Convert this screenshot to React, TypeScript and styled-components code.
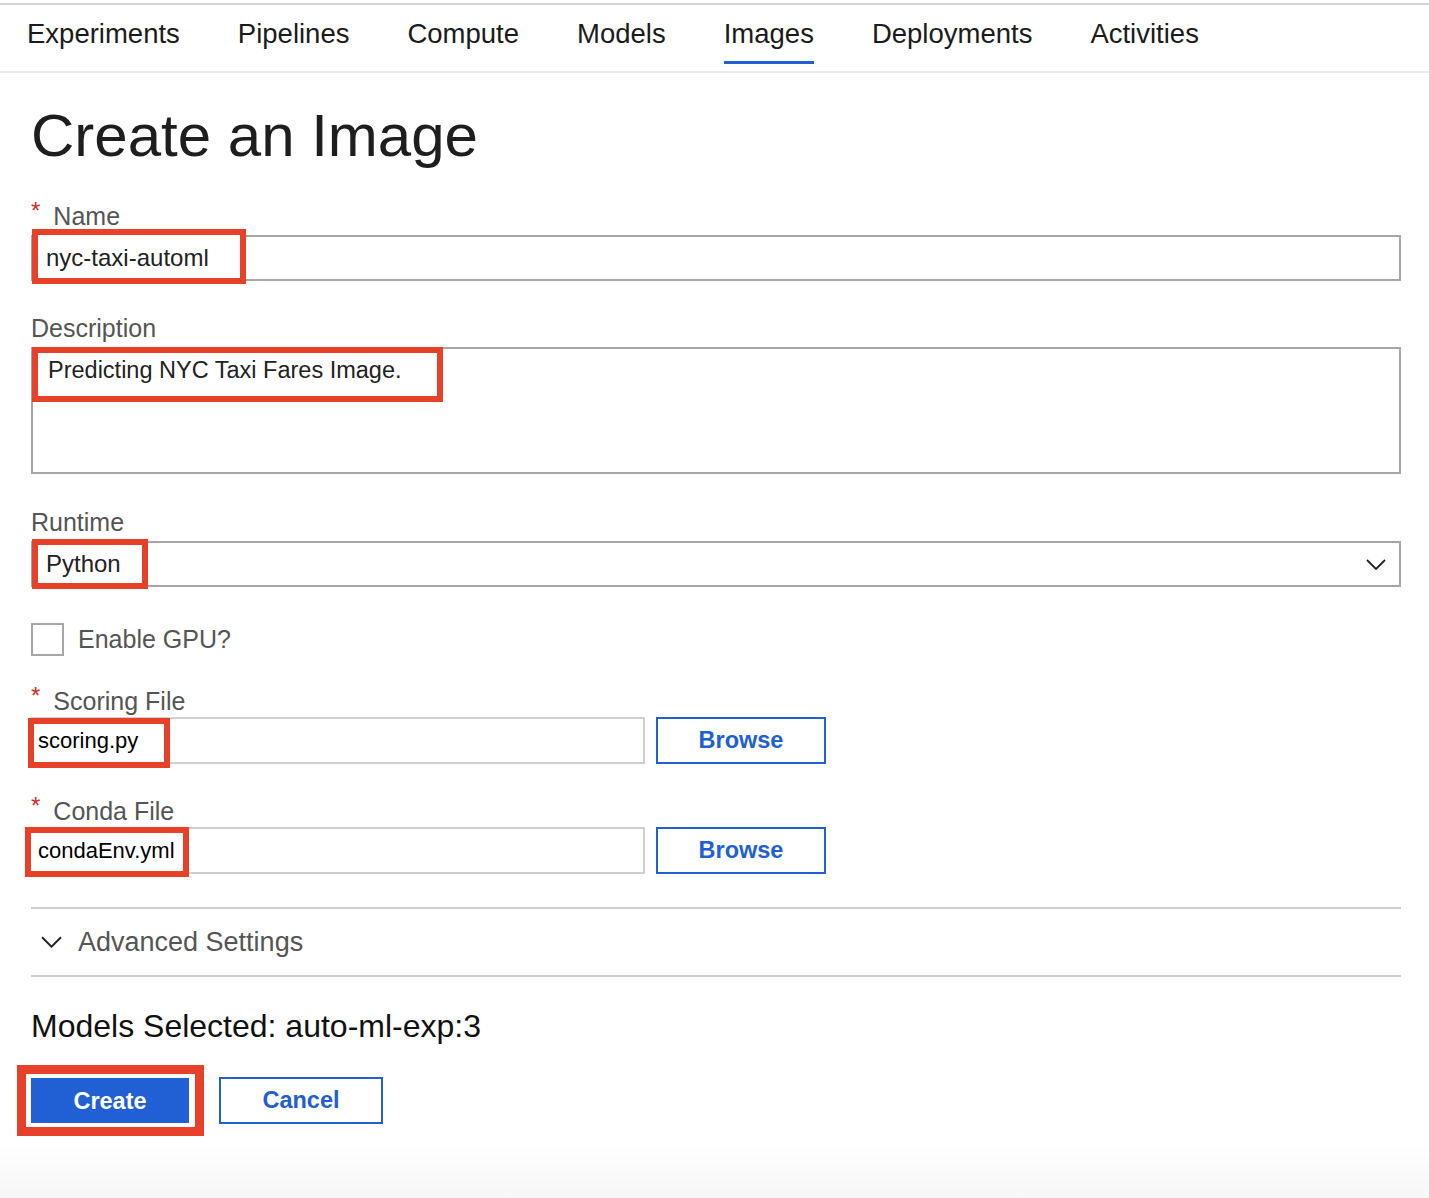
import React from "react";
import styled, { createGlobalStyle } from "styled-components";

const blue = "#2160d4";
const markRed = "#e8412a";

const GlobalStyle = createGlobalStyle`
  html, body {
    margin: 0;
    padding: 0;
  }
  body {
    font-family: "Liberation Sans", Arial, sans-serif;
    color: #222;
    background: linear-gradient(to bottom, #fff 0, #fff 1140px, #f6f6f6 1198px);
    min-height: 1198px;
  }
`;

const NavBar = styled.nav`
  margin-top: 3px;
  height: 66px;
  border-top: 2px solid #d6d6d6;
  border-bottom: 2px solid #e8e8e8;
  display: flex;
  align-items: flex-start;
  gap: 58px;
  padding-left: 27px;
`;

const NavItem = styled.a<{ $active?: boolean }>`
  padding-top: 13px;
  padding-bottom: 11px;
  font-size: 27.5px;
  line-height: 32px;
  color: #1b1b1b;
  text-decoration: none;
  border-bottom: 3px solid ${(p) => (p.$active ? blue : "transparent")};
  cursor: pointer;
`;

const Page = styled.main`
  padding: 0 28px 0 31px;
`;

const Title = styled.h1`
  margin: 28px 0 0;
  font-size: 60px;
  line-height: 70px;
  font-weight: 400;
  color: #1e1e1e;
`;

const Field = styled.div<{ $gap?: number }>`
  margin-top: ${(p) => p.$gap ?? 32}px;
`;

const Label = styled.label<{ $tight?: boolean }>`
  display: block;
  height: 30px;
  font-size: 25px;
  line-height: 30px;
  color: #555;
  margin-bottom: ${(p) => (p.$tight ? 1 : 4)}px;
`;

const Required = styled.span`
  display: inline-block;
  vertical-align: top;
  line-height: 20px;
  color: #d8291f;
  font-size: 24px;
  margin-right: 13px;
`;

const Anchor = styled.div`
  position: relative;
`;

const Mark = styled.div<{ $x: number; $y: number; $w: number; $h: number; $b?: number; $pad?: number }>`
  position: absolute;
  left: ${(p) => p.$x}px;
  top: ${(p) => p.$y}px;
  width: ${(p) => p.$w}px;
  height: ${(p) => p.$h}px;
  box-sizing: border-box;
  border: ${(p) => p.$b ?? 6}px solid ${markRed};
  box-shadow: inset 0 0 0 ${(p) => p.$pad ?? 2}px #fff;
  pointer-events: none;
`;

const TextInput = styled.input`
  display: block;
  box-sizing: border-box;
  width: 100%;
  height: 46px;
  margin: 0;
  border: 2px solid #a6a6a6;
  padding: 0 13px;
  font-family: "Liberation Sans", Arial, sans-serif;
  font-size: 24px;
  color: #222;
  background: #fff;
  outline: none;
`;

const TextArea = styled.textarea`
  display: block;
  box-sizing: border-box;
  width: 100%;
  height: 127px;
  margin: 0;
  border: 2px solid #a6a6a6;
  padding: 7px 15px;
  font-family: "Liberation Sans", Arial, sans-serif;
  font-size: 23.5px;
  line-height: 28px;
  color: #222;
  resize: none;
  outline: none;
`;

const SelectBox = styled.div`
  box-sizing: border-box;
  height: 46px;
  border: 2px solid #a6a6a6;
  padding: 0 13px 0 13px;
  display: flex;
  align-items: center;
  justify-content: space-between;
  font-size: 24px;
  color: #222;
`;

const CheckRow = styled.label`
  margin-top: 36px;
  display: flex;
  align-items: center;
  gap: 14px;
  font-size: 25px;
  color: #555;
`;

const CheckBox = styled.span`
  box-sizing: border-box;
  width: 33px;
  height: 33px;
  border: 2px solid #a6a6a6;
  background: #fff;
`;

const FileRow = styled.div`
  display: flex;
  align-items: stretch;
  gap: 11px;
`;

const FileInput = styled.input`
  box-sizing: border-box;
  width: 614px;
  height: 47px;
  margin: 0;
  border: 2px solid #cfcfcf;
  padding: 0 5px;
  font-family: "Liberation Sans", Arial, sans-serif;
  font-size: 22px;
  color: #000;
  outline: none;
`;

const Button = styled.button<{ $primary?: boolean; $w: number }>`
  box-sizing: border-box;
  width: ${(p) => p.$w}px;
  height: 47px;
  margin: 0;
  padding: 0;
  border: 2px solid ${blue};
  background: ${(p) => (p.$primary ? blue : "#fff")};
  color: ${(p) => (p.$primary ? "#fff" : blue)};
  font-family: "Liberation Sans", Arial, sans-serif;
  font-weight: 700;
  font-size: 23.5px;
  cursor: pointer;
`;

const Advanced = styled.div`
  margin-top: 33px;
  height: 66px;
  border-top: 2px solid #cbcfd3;
  border-bottom: 2px solid #cbcfd3;
  display: flex;
  align-items: center;
  gap: 16px;
  padding-left: 10px;
  font-size: 27px;
  color: #555;
`;

const Selected = styled.h2`
  margin: 31px 0 0;
  font-size: 32px;
  line-height: 36px;
  font-weight: 400;
  color: #111;
`;

const Actions = styled.div`
  margin-top: 33px;
  display: flex;
  gap: 30px;
`;

const Chevron = ({ w, h }: { w: number; h: number }) => (
  <svg width={w} height={h} viewBox="0 0 20 11" fill="none">
    <path d="M1 1l9 9 9-9" stroke="#222" strokeWidth="1.8" />
  </svg>
);

const tabs = ["Experiments", "Pipelines", "Compute", "Models", "Images", "Deployments", "Activities"];

export default function App() {
  return (
    <>
      <GlobalStyle />
      <NavBar>
        {tabs.map((t) => (
          <NavItem key={t} $active={t === "Images"}>
            {t}
          </NavItem>
        ))}
      </NavBar>
      <Page>
        <Title>Create an Image</Title>

        <Field $gap={30}>
          <Label>
            <Required>*</Required>Name
          </Label>
          <Anchor>
            <TextInput defaultValue="nyc-taxi-automl" />
            <Mark $x={1} $y={-6} $w={214} $h={55} />
          </Anchor>
        </Field>

        <Field>
          <Label>Description</Label>
          <Anchor>
            <TextArea defaultValue="Predicting NYC Taxi Fares Image." />
            <Mark $x={1} $y={0} $w={411} $h={55} />
          </Anchor>
        </Field>

        <Field $gap={33}>
          <Label>Runtime</Label>
          <Anchor>
            <SelectBox>
              <span>Python</span>
              <Chevron w={20} h={11} />
            </SelectBox>
            <Mark $x={1} $y={-2} $w={116} $h={50} />
          </Anchor>
        </Field>

        <CheckRow>
          <CheckBox />
          Enable GPU?
        </CheckRow>

        <Field $gap={30}>
          <Label $tight>
            <Required>*</Required>Scoring File
          </Label>
          <FileRow>
            <Anchor>
              <FileInput defaultValue="scoring.py" />
              <Mark $x={-3} $y={1} $w={142} $h={50} />
            </Anchor>
            <Button $w={170}>Browse</Button>
          </FileRow>
        </Field>

        <Field>
          <Label $tight>
            <Required>*</Required>Conda File
          </Label>
          <FileRow>
            <Anchor>
              <FileInput defaultValue="condaEnv.yml" />
              <Mark $x={-6} $y={0} $w={164} $h={50} />
            </Anchor>
            <Button $w={170}>Browse</Button>
          </FileRow>
        </Field>

        <Advanced>
          <Chevron w={21} h={12} />
          Advanced Settings
        </Advanced>

        <Selected>Models Selected: auto-ml-exp:3</Selected>

        <Actions>
          <Anchor>
            <Button $primary $w={158} style={{ height: 48 }}>
              Create
            </Button>
            <Mark $x={-14} $y={-12} $w={187} $h={71} $b={9} $pad={4} />
          </Anchor>
          <Button $w={164}>Cancel</Button>
        </Actions>
      </Page>
    </>
  );
}
